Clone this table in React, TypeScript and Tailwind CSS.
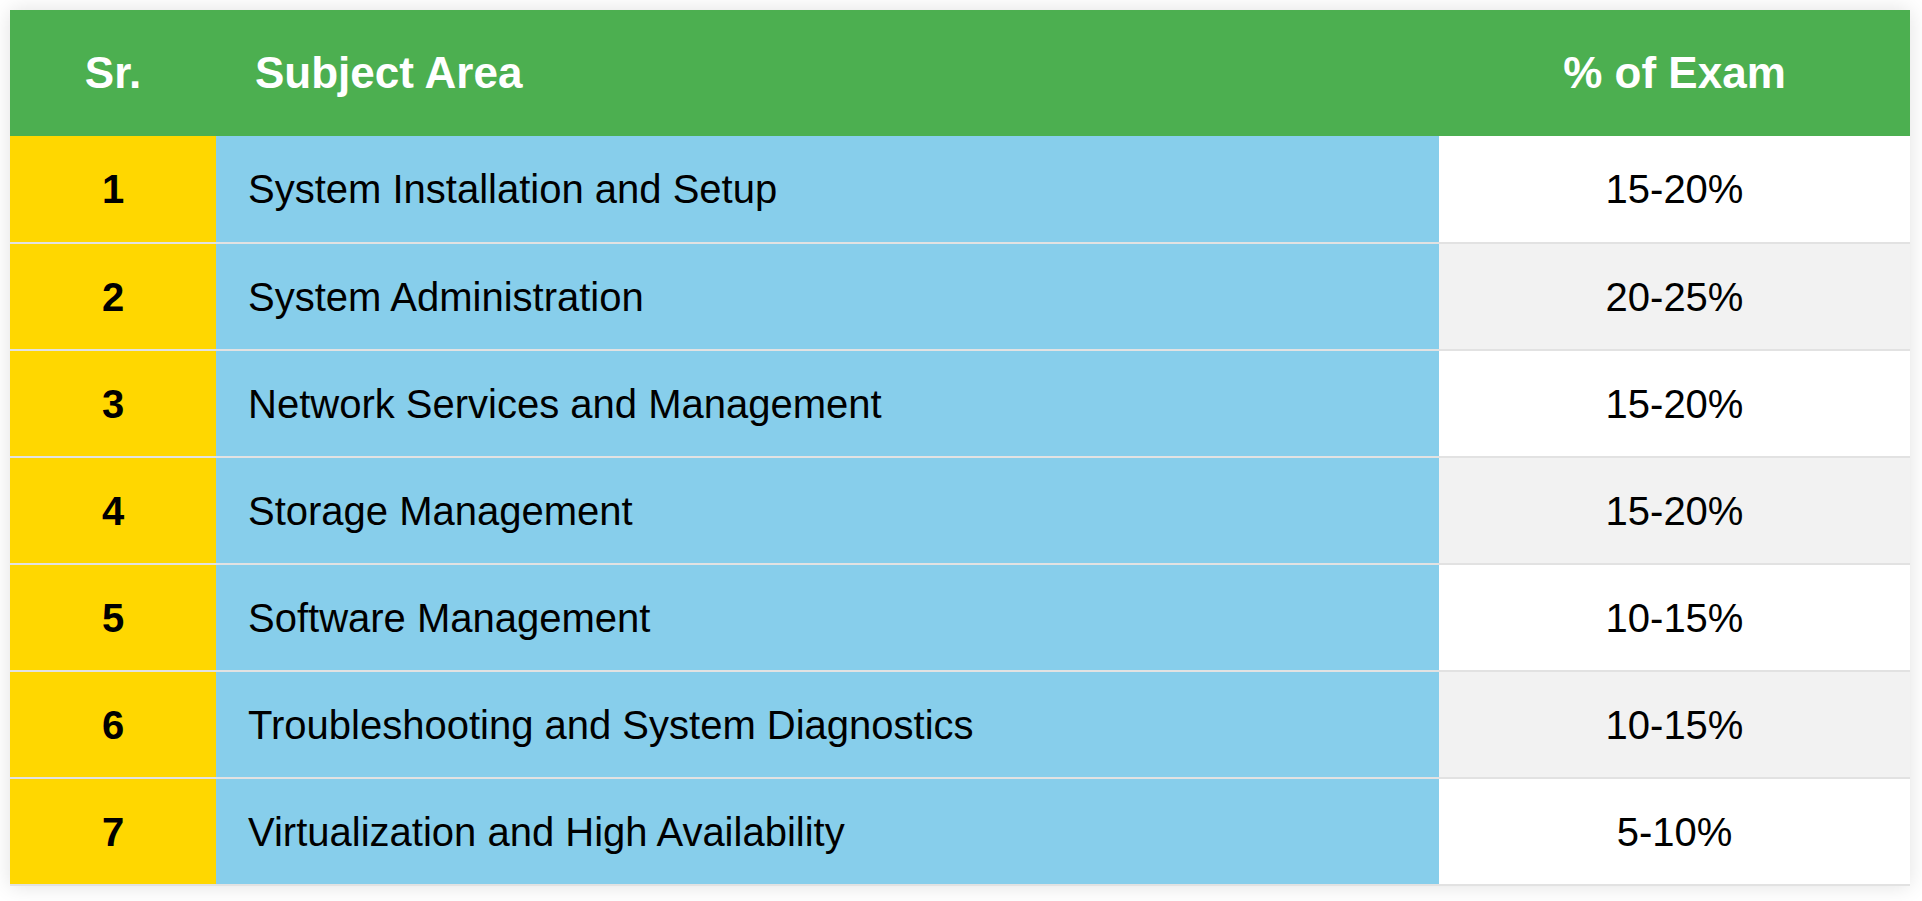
import React from 'react';

const rows = [
  { sr: 1, area: 'System Installation and Setup', pct: '15-20%' },
  { sr: 2, area: 'System Administration', pct: '20-25%' },
  { sr: 3, area: 'Network Services and Management', pct: '15-20%' },
  { sr: 4, area: 'Storage Management', pct: '15-20%' },
  { sr: 5, area: 'Software Management', pct: '10-15%' },
  { sr: 6, area: 'Troubleshooting and System Diagnostics', pct: '10-15%' },
  { sr: 7, area: 'Virtualization and High Availability', pct: '5-10%' },
];

export default function App() {
  return (
    <div className="min-h-screen bg-white p-[10px] font-['Liberation_Sans',Arial,sans-serif] text-black">
      <table className="w-[1900px] table-fixed border-collapse shadow-[0_0_20px_rgba(0,0,0,0.12)]">
        <colgroup>
          <col className="w-[206px]" />
          <col className="w-[1223px]" />
          <col className="w-[471px]" />
        </colgroup>
        <thead>
          <tr className="h-[126px] bg-[#4caf50] text-[44px] font-bold text-white">
            <th className="text-center">Sr.</th>
            <th className="pl-[39px] text-left">Subject Area</th>
            <th className="text-center">% of Exam</th>
          </tr>
        </thead>
        <tbody>
          {rows.map((row, i) => (
            <tr
              key={row.sr}
              className={`h-[107px] border-b-2 border-[#e2e2e2] text-[40px] ${
                i % 2 === 1 ? 'bg-[#f2f2f2]' : 'bg-white'
              }`}
            >
              <td className="bg-[#ffd700] text-center font-bold">{row.sr}</td>
              <td className="bg-[#87ceeb] pl-[32px] text-left">{row.area}</td>
              <td className="text-center">{row.pct}</td>
            </tr>
          ))}
        </tbody>
      </table>
    </div>
  );
}
